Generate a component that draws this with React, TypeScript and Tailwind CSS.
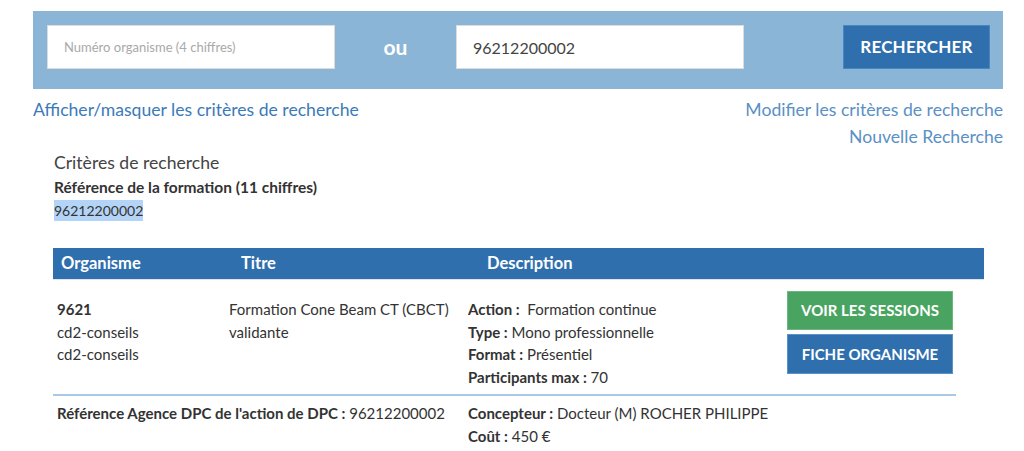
import React from 'react';

const font = { fontFamily: '"Lato", "Liberation Sans", sans-serif' };

export default function App() {
  return (
    <div className="w-[1024px] h-[451px] overflow-hidden bg-white text-[#333]" style={font}>
      <div className="pl-[33px] pt-[11px]">
        {/* search bar */}
        <div className="w-[970px] h-[78px] bg-[#8bb5d7] flex items-start pt-[14px] pl-[14px] pr-[13px]">
          <input
            className="w-[288px] h-[44px] bg-white border border-[#dcdcdc] px-[16px] text-[13px] text-[#333] placeholder:text-[#a9a9a9] outline-none"
            placeholder="Numéro organisme (4 chiffres)"
          />
          <div className="w-[121px] h-[44px] flex items-center justify-center text-white font-bold text-[21px]">ou</div>
          <input
            className="w-[288px] h-[44px] bg-white border border-[#dcdcdc] px-[16px] text-[16px] text-[#444] outline-none"
            defaultValue="96212200002"
          />
          <div className="flex-1" />
          <button className="w-[147px] h-[44px] bg-[#2f6fae] border border-[#4a86c0] text-white font-bold text-[17px] tracking-[0.2px]">
            RECHERCHER
          </button>
        </div>

        {/* links */}
        <div className="w-[970px] flex justify-between pt-[7px]">
          <a className="text-[17.6px] leading-[27px] text-[#3b7ab9]">Afficher/masquer les critères de recherche</a>
          <div className="flex flex-col items-end">
            <a className="text-[17.6px] leading-[27px] text-[#5a90c5]">Modifier les critères de recherche</a>
            <a className="text-[17.6px] leading-[27px] text-[#5a90c5]">Nouvelle Recherche</a>
          </div>
        </div>

        {/* criteria */}
        <div className="pl-[21px] pt-[1px]">
          <div className="text-[17.6px] leading-[24px] text-[#444]">Critères de recherche</div>
          <div className="text-[15.5px] leading-[24px] font-bold">Référence de la formation (11 chiffres)</div>
          <div className="text-[14px] leading-[24px]">
            <span className="bg-[#b4d4f7] inline-block leading-[21px]">96212200002</span>
          </div>
        </div>
      </div>

      {/* table */}
      <div className="pl-[53px] pt-[25px]">
        <div className="w-[931px] h-[32px] bg-[#2f6fae] border-b border-[#dde6f0] flex items-center text-white font-bold text-[16.5px]">
          <div className="w-[188px] pl-[8px]">Organisme</div>
          <div className="w-[246px]">Titre</div>
          <div>Description</div>
        </div>

        <div className="w-[903px] flex border-b-2 border-[#a9c9e6] pt-[18px] pb-[6px] text-[15px] leading-[22.5px]">
          <div className="w-[172px] pl-[4px]">
            <div className="font-bold">9621</div>
            <div>cd2-conseils</div>
            <div>cd2-conseils</div>
          </div>
          <div className="w-[239px] pl-[4px]">
            <div>Formation Cone Beam CT (CBCT)</div>
            <div>validante</div>
          </div>
          <div className="w-[319px] pl-[4px]">
            <div><span className="font-bold">Action :</span>&nbsp; Formation continue</div>
            <div><span className="font-bold">Type :</span> Mono professionnelle</div>
            <div><span className="font-bold">Format :</span> Présentiel</div>
            <div><span className="font-bold">Participants max :</span> 70</div>
          </div>
          <div className="flex flex-col gap-[4px] -mt-[7px] pl-[4px]">
            <button className="w-[166px] h-[39px] bg-[#49a461] border border-[#6bb880] text-white font-bold text-[15px]">
              VOIR LES SESSIONS
            </button>
            <button className="w-[166px] h-[40px] bg-[#2f6fae] border border-[#5b93c9] text-white font-bold text-[15px]">
              FICHE ORGANISME
            </button>
          </div>
        </div>

        <div className="w-[903px] flex pt-[6px] text-[15px] leading-[22.5px]">
          <div className="w-[411px] pl-[4px]">
            <span className="font-bold">Référence Agence DPC de l'action de DPC :</span> 96212200002
          </div>
          <div className="pl-[4px]">
            <div><span className="font-bold">Concepteur :</span> Docteur (M) ROCHER PHILIPPE</div>
            <div><span className="font-bold">Coût :</span> 450 €</div>
          </div>
        </div>
      </div>
    </div>
  );
}
